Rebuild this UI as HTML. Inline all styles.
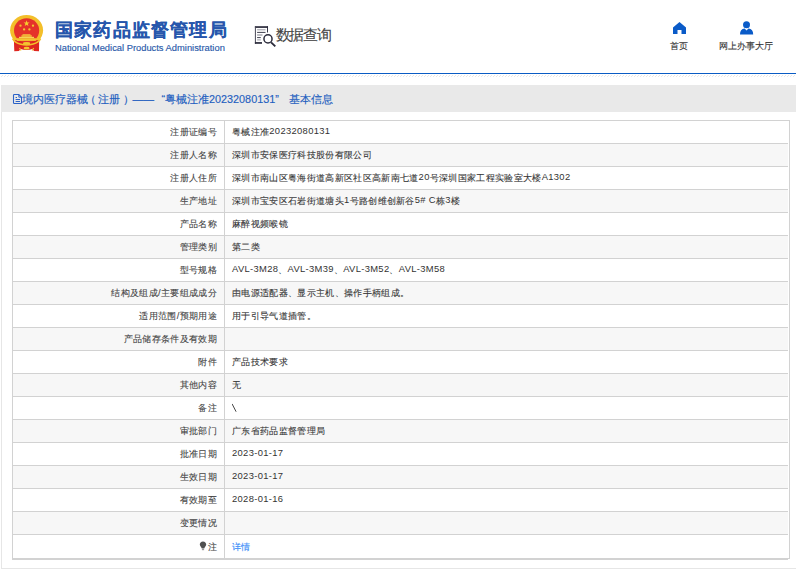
<!DOCTYPE html>
<html><head><meta charset="utf-8">
<style>
*{margin:0;padding:0;box-sizing:border-box}
html,body{width:796px;height:571px;overflow:hidden;background:#fff;font-family:"Liberation Sans",sans-serif;color:#333}
.abs{position:absolute}
#emblem{left:8px;top:12px;width:38px;height:44px}
#title{left:55px;top:16.5px;font-size:18px;font-weight:bold;color:#2656ac;white-space:nowrap;line-height:26px;letter-spacing:1.2px;-webkit-text-stroke:.12px #2656ac}
#sub{left:55px;top:42px;font-size:9.35px;color:#2a5aaa;-webkit-text-stroke:.15px #2a5aaa;white-space:nowrap;line-height:12px}
#qicon{left:254px;top:25px;width:24px;height:24px}
#qtext{left:275.5px;top:24.5px;font-size:15px;letter-spacing:-1.1px;color:#444;-webkit-text-stroke:.12px #444;white-space:nowrap;line-height:20px}
.nav{top:40px;font-size:9.4px;color:#333;white-space:nowrap;line-height:12px;letter-spacing:.2px;-webkit-text-stroke:.1px #333}
#bline{left:0;top:73px;width:796px;height:1px;background:#0a5cc4}
#hatch{left:0;top:75px;width:796px;height:2px;background:repeating-linear-gradient(135deg,#e6e6e6 0 1px,#fff 1px 3px)}
#panel{left:1px;top:85px;width:800px;height:484px;border-left:1px solid #e6e6e6;border-bottom:1px solid #e6e6e6}
#phead{left:1px;top:85px;width:800px;height:27px;background:#e9e9e9}
#crumb{left:12px;top:89px;font-size:10.8px;color:#1f5fc0;white-space:nowrap;line-height:20px;-webkit-text-stroke:.15px #1f5fc0}
#crumb svg{vertical-align:-1px}
table{position:absolute;left:12px;top:120px;width:776px;border-collapse:collapse;font-size:9.4px;letter-spacing:.33px;-webkit-text-stroke:.1px #444}
td{border:1px solid #d2d2d2;height:23px;padding:0;white-space:nowrap;line-height:12px}
tr:nth-child(even) td{background:#f7f7f7}
td.l{width:212px;text-align:right;padding-right:7px;color:#444}
td.v{padding-left:7px;color:#333;border-right:none}
.n{-webkit-text-stroke:0;position:relative;top:-1px}
#tb{left:12px;top:120px;width:778px;height:439px;border:1px solid #d2d2d2}
a{color:#3088f8;text-decoration:none;-webkit-text-stroke:.1px #3088f8}
</style></head><body>
<svg id="emblem" class="abs" viewBox="8 12 38 44">
  <ellipse cx="26.6" cy="30.3" rx="16.5" ry="15.2" fill="#f3bf2a"/>
  <path d="M13.9 40.2 L14.3 51.3 L19 51 L20.5 49 Q26.6 51.2 32.5 49 L34 51 L39 51.3 L39.2 40.2Z" fill="#de2620"/>
  <ellipse cx="26.6" cy="30.6" rx="12.6" ry="12.4" fill="#e5322a"/>
  <polygon points="26.6,20.3 27.35,22.5 29.6,22.5 27.8,23.85 28.45,26 26.6,24.7 24.75,26 25.4,23.85 23.6,22.5 25.85,22.5" fill="#f6d02e"/>
  <circle cx="20.5" cy="25.7" r="1.15" fill="#f3c530"/>
  <circle cx="33" cy="25.7" r="1.15" fill="#f3c530"/>
  <circle cx="24.1" cy="29.4" r="1.15" fill="#f3c530"/>
  <circle cx="29.4" cy="29.4" r="1.15" fill="#f3c530"/>
  <rect x="22.5" y="34.3" width="8" height="1.2" fill="#f7d040"/>
  <rect x="21.4" y="35.3" width="10.4" height="1.5" fill="#f3c235"/>
  <rect x="19" y="36.8" width="15" height="1.4" fill="#f6d255"/>
  <rect x="16.8" y="38.2" width="19.1" height="2.7" fill="#f3c530"/>
  <path d="M12.6 38.6 Q14.5 42.5 20 44 Q23.5 44.9 26.6 44.9 Q29.7 44.9 33.2 44 Q38.7 42.5 40.6 38.6" stroke="#f3c02a" stroke-width="1.5" fill="none"/>
  <ellipse cx="26.6" cy="43.4" rx="3.6" ry="1.4" fill="#f3c530"/>
  <ellipse cx="26.6" cy="48.2" rx="3" ry="1.4" fill="#f3c530"/>
  <path d="M19.5 48 L21 50.5 M33.7 48 L32.2 50.5" stroke="#f3c530" stroke-width="1.2"/>
</svg>
<div id="title" class="abs">国家药品监督管理局</div>
<div id="sub" class="abs">National Medical Products Administration</div>
<svg id="qicon" class="abs" viewBox="0 0 24 24">
  <rect x=".9" y="1.2" width="13" height="1.7" fill="#2b2b3b"/>
  <rect x="13" y="1.2" width=".95" height="6.3" fill="#2b2b3b"/>
  <rect x=".9" y="1.2" width="1" height="17.6" fill="#4a4a58"/>
  <rect x=".9" y="17.1" width="7.1" height="1.7" fill="#2b2b3b"/>
  <path d="M3.1 4.8 H11.5" stroke="#9a9aa4" stroke-width="1"/>
  <path d="M3.1 7.4 H11.5" stroke="#2b2b3b" stroke-width=".9"/>
  <path d="M3.1 10 H8.5" stroke="#7c7c88" stroke-width="1"/>
  <path d="M3.1 12.6 H6.8" stroke="#2b2b3b" stroke-width=".9"/>
  <path d="M3.1 14.9 H6.8" stroke="#9a9aa4" stroke-width="1"/>
  <circle cx="14" cy="13.9" r="4.05" stroke="#2b2b3b" stroke-width="1.5" fill="none"/>
  <path d="M17.1 17.4 L21.3 21.4" stroke="#2b2b3b" stroke-width="1.9"/>
</svg>
<div id="qtext" class="abs">数据查询</div>

<svg class="abs" style="left:672px;top:21px" width="15" height="14" viewBox="0 0 15 14">
  <path d="M7.5 1 L14 6.5 V13 H9.5 V9 H5.5 V13 H1 V6.5Z" fill="#0a5bc8"/>
</svg>
<div class="abs nav" style="left:669.5px">首页</div>
<svg class="abs" style="left:739px;top:20px" width="15" height="15" viewBox="0 0 15 15">
  <circle cx="7.5" cy="4.7" r="3.5" fill="#0a5bc8"/>
  <path d="M1 14.5 Q1 8.6 5.6 8.4 L7.5 10.6 L9.5 8.4 Q14.2 8.6 14.2 14.5Z" fill="#0a5bc8"/>
</svg>
<div class="abs nav" style="left:718.5px">网上办事大厅</div>

<div id="bline" class="abs"></div>
<svg class="abs" style="left:0;top:75px" width="796" height="2"><defs><pattern id="hp" width="3" height="2" patternUnits="userSpaceOnUse"><rect x="2" y="0" width="1" height="1" fill="#e8e8e8"/><rect x="1" y="1" width="1" height="1" fill="#e8e8e8"/></pattern></defs><rect width="796" height="2" fill="url(#hp)"/></svg>
<div id="panel" class="abs"></div>
<div id="phead" class="abs"></div>
<div id="crumb" class="abs"><svg class="abs" style="left:0px;top:4px" width="11" height="12" viewBox="0 0 11 12"><path d="M1.5 2.3 Q1.5 1.5 2.3 1.5 H6.8 L9.5 4.2 V9.7 Q9.5 10.5 8.7 10.5 H2.3 Q1.5 10.5 1.5 9.7Z" stroke="#2a62c8" stroke-width="1.1" fill="none"/><path d="M6.8 1.8 V4.2 H9.2" stroke="#2a62c8" stroke-width=".9" fill="none"/><path d="M3.6 4.5 H5 M3.6 6.5 H8 M3.6 8.5 H8" stroke="#2a62c8" stroke-width="1"/></svg><span class="abs" style="left:10px">境内医疗器械</span><span class="abs" style="left:73.4px">（</span><span class="abs" style="left:85.5px">注册</span><span class="abs" style="left:110.6px">）</span><span class="abs" style="left:120.5px">——</span><span class="abs" style="left:149.5px">“粤械注准20232080131”</span><span class="abs" style="left:276.5px">基本信息</span></div>

<table>
<tr><td class="l">注册证编号</td><td class="v">粤械注准<span class="n">20232080131</span></td></tr>
<tr><td class="l">注册人名称</td><td class="v">深圳市安保医疗科技股份有限公司</td></tr>
<tr><td class="l">注册人住所</td><td class="v">深圳市南山区粤海街道高新区社区高新南七道<span class="n">20</span>号深圳国家工程实验室大楼<span class="n">A1302</span></td></tr>
<tr><td class="l">生产地址</td><td class="v">深圳市宝安区石岩街道塘头<span class="n">1</span>号路创维创新谷<span class="n">5#</span> <span class="n">C</span>栋<span class="n">3</span>楼</td></tr>
<tr><td class="l">产品名称</td><td class="v">麻醉视频喉镜</td></tr>
<tr><td class="l">管理类别</td><td class="v">第二类</td></tr>
<tr><td class="l">型号规格</td><td class="v"><span class="n">AVL-3M28</span>、<span class="n">AVL-3M39</span>、<span class="n">AVL-3M52</span>、<span class="n">AVL-3M58</span></td></tr>
<tr><td class="l">结构及组成/主要组成成分</td><td class="v">由电源适配器、显示主机、操作手柄组成。</td></tr>
<tr><td class="l">适用范围/预期用途</td><td class="v">用于引导气道插管。</td></tr>
<tr><td class="l">产品储存条件及有效期</td><td class="v"></td></tr>
<tr><td class="l">附件</td><td class="v">产品技术要求</td></tr>
<tr><td class="l">其他内容</td><td class="v">无</td></tr>
<tr><td class="l">备注</td><td class="v"><svg width="6" height="10" viewBox="0 0 6 10" style="vertical-align:-1.5px"><path d="M.1 .9 L4.1 8.7" stroke="#444" stroke-width="1"/></svg></td></tr>
<tr><td class="l">审批部门</td><td class="v">广东省药品监督管理局</td></tr>
<tr><td class="l">批准日期</td><td class="v"><span class="n">2023-01-17</span></td></tr>
<tr><td class="l">生效日期</td><td class="v"><span class="n">2023-01-17</span></td></tr>
<tr><td class="l">有效期至</td><td class="v"><span class="n">2028-01-16</span></td></tr>
<tr><td class="l">变更情况</td><td class="v"></td></tr>
<tr><td class="l" style="height:25px"><svg width="8" height="10" viewBox="0 0 8 10" style="vertical-align:-1px;margin-right:1px"><path d="M4 .4 C6 .4 7.2 1.8 7.2 3.6 C7.2 5.2 5.6 6.2 5.2 7.6 H2.8 C2.4 6.2 .8 5.2 .8 3.6 C.8 1.8 2 .4 4 .4Z" fill="#505050"/><rect x="2.9" y="8" width="2.2" height="1.2" fill="#9a9a9a"/></svg>注</td><td class="v"><a>详情</a></td></tr>
</table>
<div id="tb" class="abs"></div>
</body></html>
